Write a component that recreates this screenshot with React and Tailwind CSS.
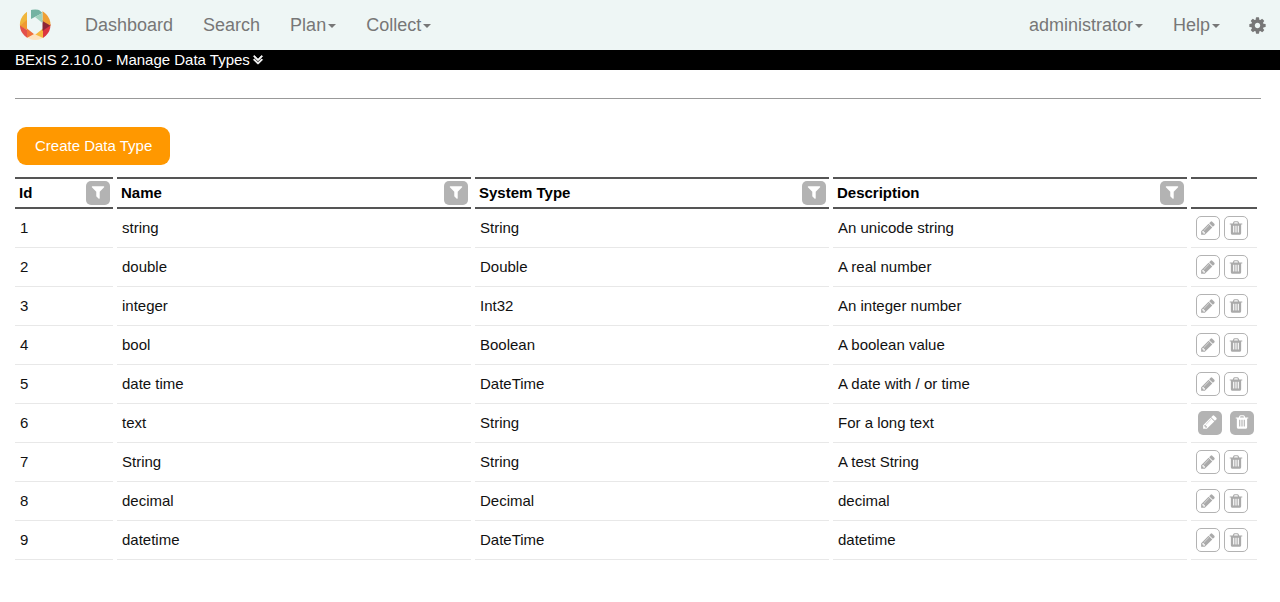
import React from "react";

const PATHS = {
  cog: "M1152 896q0-106-75-181t-181-75-181 75-75 181 75 181 181 75 181-75 75-181zm512-109v222q0 12-8 23t-20 13l-185 28q-19 54-39 91 35 50 107 138 10 12 10 25t-9 23q-27 37-99 108t-94 71q-12 0-26-9l-138-108q-44 23-91 38-16 136-29 186-7 28-36 28h-222q-14 0-24.5-8.5t-11.5-21.5l-28-184q-49-16-90-37l-141 107q-10 9-25 9-14 0-25-11-126-114-165-168-7-10-7-23 0-12 8-23 15-21 51-66.5t54-70.5q-27-50-41-99l-183-27q-13-2-21-12.5t-8-23.5v-222q0-12 8-23t19-13l186-28q14-46 39-92-40-57-107-138-10-12-10-24 0-10 9-23 26-36 98.5-107.5t94.5-71.5q13 0 26 10l138 107q44-23 91-38 16-136 29-186 7-28 36-28h222q14 0 24.5 8.5t11.5 21.5l28 184q49 16 90 37l142-107q9-9 24-9 13 0 25 10 129 119 165 170 7 8 7 22 0 12-8 23-15 21-51 66.5t-54 70.5q26 50 41 98l183 28q13 2 21 12.5t8 23.5z",
  filter: "M1595 295q17 41-14 70l-493 493v742q0 42-39 59-13 5-25 5-27 0-45-19l-256-256q-19-19-19-45v-486l-493-493q-31-29-14-70 17-39 59-39h1280q42 0 59 39z",
  pencil: "M491 1536l91-91-235-235-91 91v107h128v128h107zm523-928q0-22-22-22-10 0-17 7l-542 542q-7 7-7 17 0 22 22 22 10 0 17-7l542-542q7-7 7-17zm-54-192l416 416-832 832h-416v-416zm683 96q0 53-37 90l-166 166-416-416 166-165q36-38 90-38 53 0 91 38l235 234q37 39 37 91z",
  trash: "M704 1376v-704q0-14-9-23t-23-9h-64q-14 0-23 9t-9 23v704q0 14 9 23t23 9h64q14 0 23-9t9-23zm256 0v-704q0-14-9-23t-23-9h-64q-14 0-23 9t-9 23v704q0 14 9 23t23 9h64q14 0 23-9t9-23zm256 0v-704q0-14-9-23t-23-9h-64q-14 0-23 9t-9 23v704q0 14 9 23t23 9h64q14 0 23-9t9-23zm-544-992h448l-48-117q-7-9-17-11h-317q-10 2-17 11zm928 32v64q0 14-9 23t-23 9h-96v948q0 83-47 143.5t-113 60.5h-832q-66 0-113-58.5t-47-141.5v-952h-96q-14 0-23-9t-9-23v-64q0-14 9-23t23-9h309l70-167q15-37 54-63t79-26h320q40 0 79 26t54 63l70 167h309q14 0 23 9t9 23z",
  down: "M1395 864q0 13-10 23l-466 466q-10 10-23 10t-23-10l-466-466q-10-10-10-23t10-23l50-50q10-10 23-10t23 10l393 393 393-393q10-10 23-10t23 10l50 50q10 10 10 23zm0-384q0 13-10 23l-466 466q-10 10-23 10t-23-10l-466-466q-10-10-10-23t10-23l50-50q10-10 23-10t23 10l393 393 393-393q10-10 23-10t23 10l50 50q10 10 10 23z",
};

function Icon({ name, className }) {
  return (
    <svg viewBox="0 0 1792 1792" className={className} fill="currentColor" aria-hidden="true">
      <path d={PATHS[name]} />
    </svg>
  );
}

function Logo() {
  return (
    <svg viewBox="0 0 32 32" className="size-8" aria-hidden="true">
      <defs>
        <clipPath id="ring">
          <circle cx="16.2" cy="15.8" r="15.3" />
        </clipPath>
      </defs>
      <g clipPath="url(#ring)">
        <path d="M0 0h8v12L0 17z" fill="#f0b63c" />
        <path d="M8 11v10l-8-4z" fill="#f09a32" />
        <path d="M0 16l8 5v11H0z" fill="#e2504c" />
        <path d="M8 19.500l7.500 6L8 29.500z" fill="#f0703c" />
        <path d="M6 30l10-5.500 9 5-2 3H8z" fill="#fde3c0" />
        <path d="M24 19.500v9.500l-7.500-3.500z" fill="#f6b93e" />
        <path d="M32 15v17h-8V21z" fill="#dc3540" />
        <path d="M23.500 11l8.500 5-8.500 6z" fill="#8c2638" />
        <path d="M23.500 0H32v17l-8.500-5z" fill="#f09f34" />
        <path d="M12 0h7l4.500 4L12 10z" fill="#74b3a2" />
        <path d="M23.500 4v10L16 8z" fill="#a0d2bd" />
      </g>
    </svg>
  );
}

function NavLink({ children, menu }) {
  return (
    <a href="#" className="flex items-center gap-0.5 px-[15px] text-lg leading-5 text-[#777777]">
      {children}
      {menu && (
        <svg viewBox="0 0 8 4" className="mt-0.5 h-1 w-2" fill="currentColor" aria-hidden="true">
          <path d="M0 0h8L4 4z" />
        </svg>
      )}
    </a>
  );
}

const COLUMNS = ["Id", "Name", "System Type", "Description"];

const ROWS = [
  [1, "string", "String", "An unicode string"],
  [2, "double", "Double", "A real number"],
  [3, "integer", "Int32", "An integer number"],
  [4, "bool", "Boolean", "A boolean value"],
  [5, "date time", "DateTime", "A date with / or time"],
  [6, "text", "String", "For a long text", true],
  [7, "String", "String", "A test String"],
  [8, "decimal", "Decimal", "decimal"],
  [9, "datetime", "DateTime", "datetime"],
];

function RowActions({ name, solid }) {
  const button = solid
    ? "flex size-6 items-center justify-center rounded-[5px] bg-[#b3b3b3] pb-0.5 text-white"
    : "flex size-6 items-center justify-center rounded-[5px] border border-[#b3b3b3] bg-white text-[#aaaaaa]";
  return (
    <div className={solid ? "flex gap-2 pl-[7px]" : "flex gap-1 pl-[5px]"}>
      <button type="button" aria-label={`Edit ${name}`} className={button}>
        <Icon name="pencil" className="size-4" />
      </button>
      <button type="button" aria-label={`Delete ${name}`} className={button}>
        <Icon name="trash" className="size-4" />
      </button>
    </div>
  );
}

export default function App() {
  return (
    <div className="bg-white font-['Liberation_Sans',Arial,sans-serif] text-[15px] leading-5 text-black">
      <nav className="flex h-[50px] justify-between bg-[#eef6f5]">
        <div className="flex">
          <a href="#" aria-label="Home" className="flex items-center px-[19px]">
            <Logo />
          </a>
          <NavLink>Dashboard</NavLink>
          <NavLink>Search</NavLink>
          <NavLink menu>Plan</NavLink>
          <NavLink menu>Collect</NavLink>
        </div>
        <div className="flex">
          <NavLink menu>administrator</NavLink>
          <NavLink menu>Help</NavLink>
          <button type="button" aria-label="Settings" className="flex items-center px-[13px] text-[#777777]">
            <Icon name="cog" className="size-[19px]" />
          </button>
        </div>
      </nav>
      <div className="flex h-5 items-center bg-black px-[15px] text-white">
        <span>BExIS 2.10.0 - Manage Data Types</span>
        <button type="button" aria-label="Show details">
          <Icon name="down" className="size-4 stroke-current stroke-[90]" />
        </button>
      </div>
      <main className="pt-7 pr-[19px] pb-10 pl-[15px]">
        <hr className="border-t border-[#999999]" />
        <button type="button" className="mt-7 ml-0.5 h-[38px] rounded-[9px] bg-[#ff9800] px-[18px] text-white">
          Create Data Type
        </button>
        <div className="mt-3 -ml-1">
          <table className="w-full table-fixed border-separate border-spacing-x-1 border-spacing-y-0">
            <colgroup>
              <col className="w-[98px]" />
              <col />
              <col />
              <col />
              <col className="w-[66px]" />
            </colgroup>
            <thead>
              <tr className="h-8">
                {COLUMNS.map((title) => (
                  <th key={title} className="border-y-2 border-[#555555] p-0 pr-[3px] pl-1 text-left font-bold">
                    <div className="flex items-center justify-between">
                      {title}
                      <button
                        type="button"
                        aria-label={`Filter ${title}`}
                        className="flex size-6 items-center justify-center rounded-[5px] bg-[#b3b3b3] pb-0.5 text-white"
                      >
                        <Icon name="filter" className="size-4" />
                      </button>
                    </div>
                  </th>
                ))}
                <td className="border-y-2 border-[#555555] p-0" />
              </tr>
            </thead>
            <tbody>
              {ROWS.map(([id, name, type, description, solid]) => (
                <tr key={id} className="h-[39px] text-[#111111]">
                  <td className="border-b border-[#e8e8e8] p-0 pl-[5px]">{id}</td>
                  <td className="border-b border-[#e8e8e8] p-0 pl-[5px]">{name}</td>
                  <td className="border-b border-[#e8e8e8] p-0 pl-[5px]">{type}</td>
                  <td className="border-b border-[#e8e8e8] p-0 pl-[5px]">{description}</td>
                  <td className="border-b border-[#e8e8e8] p-0">
                    <RowActions name={name} solid={solid} />
                  </td>
                </tr>
              ))}
            </tbody>
          </table>
        </div>
      </main>
    </div>
  );
}
